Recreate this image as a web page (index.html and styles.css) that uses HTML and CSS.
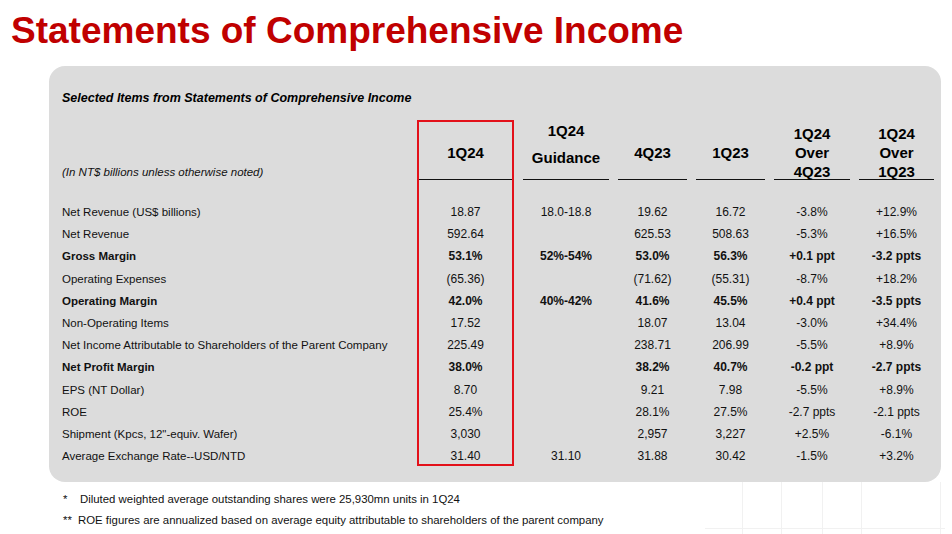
FILE: index.html
```html
<!DOCTYPE html>
<html lang="en">
<head>
<meta charset="utf-8">
<title>Statements of Comprehensive Income</title>
<link rel="stylesheet" href="styles.css">
</head>
<body>
<h1 class="title">Statements of Comprehensive Income</h1>
<section class="panel">
  <h2 class="subtitle">Selected Items from Statements of Comprehensive Income</h2>
  <div class="table">
    <div class="col col-label">
      <div class="head head-label">(In NT$ billions unless otherwise noted)</div>
      <div class="body">
        <div class="cell">Net Revenue (US$ billions)</div>
        <div class="cell">Net Revenue</div>
        <div class="cell b">Gross Margin</div>
        <div class="cell">Operating Expenses</div>
        <div class="cell b">Operating Margin</div>
        <div class="cell">Non-Operating Items</div>
        <div class="cell">Net Income Attributable to Shareholders of the Parent Company</div>
        <div class="cell b">Net Profit Margin</div>
        <div class="cell">EPS (NT Dollar)</div>
        <div class="cell">ROE</div>
        <div class="cell">Shipment (Kpcs, 12"-equiv. Wafer)</div>
        <div class="cell">Average Exchange Rate--USD/NTD</div>
      </div>
    </div>
    <div class="col col-hl">
      <div class="head"><span>1Q24</span></div>
      <div class="body">
        <div class="cell">18.87</div>
        <div class="cell">592.64</div>
        <div class="cell b">53.1%</div>
        <div class="cell">(65.36)</div>
        <div class="cell b">42.0%</div>
        <div class="cell">17.52</div>
        <div class="cell">225.49</div>
        <div class="cell b">38.0%</div>
        <div class="cell">8.70</div>
        <div class="cell">25.4%</div>
        <div class="cell">3,030</div>
        <div class="cell">31.40</div>
      </div>
    </div>
    <div class="col col-guid">
      <div class="head head-guid"><span>1Q24</span><span>Guidance</span></div>
      <div class="body">
        <div class="cell">18.0-18.8</div>
        <div class="cell"></div>
        <div class="cell b">52%-54%</div>
        <div class="cell"></div>
        <div class="cell b">40%-42%</div>
        <div class="cell"></div>
        <div class="cell"></div>
        <div class="cell b"></div>
        <div class="cell"></div>
        <div class="cell"></div>
        <div class="cell"></div>
        <div class="cell">31.10</div>
      </div>
    </div>
    <div class="col col-q">
      <div class="head"><span>4Q23</span></div>
      <div class="body">
        <div class="cell">19.62</div>
        <div class="cell">625.53</div>
        <div class="cell b">53.0%</div>
        <div class="cell">(71.62)</div>
        <div class="cell b">41.6%</div>
        <div class="cell">18.07</div>
        <div class="cell">238.71</div>
        <div class="cell b">38.2%</div>
        <div class="cell">9.21</div>
        <div class="cell">28.1%</div>
        <div class="cell">2,957</div>
        <div class="cell">31.88</div>
      </div>
    </div>
    <div class="col col-q">
      <div class="head"><span>1Q23</span></div>
      <div class="body">
        <div class="cell">16.72</div>
        <div class="cell">508.63</div>
        <div class="cell b">56.3%</div>
        <div class="cell">(55.31)</div>
        <div class="cell b">45.5%</div>
        <div class="cell">13.04</div>
        <div class="cell">206.99</div>
        <div class="cell b">40.7%</div>
        <div class="cell">7.98</div>
        <div class="cell">27.5%</div>
        <div class="cell">3,227</div>
        <div class="cell">30.42</div>
      </div>
    </div>
    <div class="col col-over1">
      <div class="head"><span>1Q24</span><span>Over</span><span>4Q23</span></div>
      <div class="body">
        <div class="cell">-3.8%</div>
        <div class="cell">-5.3%</div>
        <div class="cell b">+0.1 ppt</div>
        <div class="cell">-8.7%</div>
        <div class="cell b">+0.4 ppt</div>
        <div class="cell">-3.0%</div>
        <div class="cell">-5.5%</div>
        <div class="cell b">-0.2 ppt</div>
        <div class="cell">-5.5%</div>
        <div class="cell">-2.7 ppts</div>
        <div class="cell">+2.5%</div>
        <div class="cell">-1.5%</div>
      </div>
    </div>
    <div class="col col-over2">
      <div class="head"><span>1Q24</span><span>Over</span><span>1Q23</span></div>
      <div class="body">
        <div class="cell">+12.9%</div>
        <div class="cell">+16.5%</div>
        <div class="cell b">-3.2 ppts</div>
        <div class="cell">+18.2%</div>
        <div class="cell b">-3.5 ppts</div>
        <div class="cell">+34.4%</div>
        <div class="cell">+8.9%</div>
        <div class="cell b">-2.7 ppts</div>
        <div class="cell">+8.9%</div>
        <div class="cell">-2.1 ppts</div>
        <div class="cell">-6.1%</div>
        <div class="cell">+3.2%</div>
      </div>
    </div>
  </div>
</section>
<div class="notes">
  <p class="note"><span class="mark mark1">*</span>Diluted weighted average outstanding shares were 25,930mn units in 1Q24</p>
  <p class="note"><span class="mark mark2">**</span>ROE figures are annualized based on average equity attributable to shareholders of the parent company</p>
</div>
</body>
</html>
```

FILE: styles.css
```css
html, body {
  margin: 0;
  padding: 0;
}

body {
  width: 952px;
  height: 534px;
  overflow: hidden;
  font-family: "Liberation Sans", Arial, sans-serif;
  color: #111;
  background-color: #fff;
  background-image:
    linear-gradient(90deg, #f1f1f1 1px, transparent 1px),
    linear-gradient(90deg, #f1f1f1 1px, transparent 1px),
    linear-gradient(90deg, #f1f1f1 1px, transparent 1px),
    linear-gradient(90deg, #f1f1f1 1px, transparent 1px),
    linear-gradient(90deg, #f1f1f1 1px, transparent 1px),
    linear-gradient(0deg, #f1f1f1 1px, transparent 1px);
  background-repeat: no-repeat;
  background-size: 1px 52px, 1px 52px, 1px 52px, 1px 52px, 1px 52px, 240px 1px;
  background-position: 742px 482px, 781px 482px, 822px 482px, 861px 482px, 940px 482px, 705px 528px;
}

.title {
  margin: 0;
  padding: 12px 0 0 11px;
  font-size: 37px;
  line-height: 37px;
  font-weight: 700;
  color: #c00000;
}

.panel {
  box-sizing: border-box;
  margin: 17px 0 0 49px;
  width: 892px;
  height: 416px;
  padding: 24.5px 0 0 13px;
  background: #dcdcdc;
  border-radius: 16px;
}

.subtitle {
  margin: 0;
  font-size: 12.5px;
  line-height: 15px;
  font-weight: 700;
  font-style: italic;
  color: #000;
}

.table {
  display: flex;
  align-items: flex-start;
  gap: 9px;
  margin-top: 14.5px;
}

.col {
  display: flex;
  flex-direction: column;
  box-sizing: border-box;
  text-align: center;
}

.col > .head,
.col > .body {
  flex-shrink: 0;
}

.col-label { width: 346px; text-align: left; }
.col-hl {
  width: 97px;
  height: 346px;
  border: 2px solid #e3111a;
}
.col-guid { width: 86px; }
.col-q { width: 69px; }
.col-over1 { width: 76px; }
.col-over2 { width: 75px; }

.head {
  box-sizing: border-box;
  height: 60px;
  padding-top: 5px;
  border-bottom: 1px solid #111;
  display: flex;
  flex-direction: column;
  justify-content: center;
  align-items: center;
  font-size: 15px;
  line-height: 19px;
  font-weight: 700;
  color: #000;
}

.col-hl .head {
  height: 58px;
  padding-top: 3px;
}

.head-guid {
  justify-content: flex-start;
  padding-top: 1px;
  gap: 8px;
}

.head-label {
  border-bottom: 0;
  align-items: flex-start;
  justify-content: flex-end;
  padding: 0 0 1px 0;
  font-size: 11.5px;
  line-height: 14px;
  font-weight: 400;
  font-style: italic;
  color: #111;
}

.body {
  padding-top: 21px;
}

.cell {
  height: 22.2px;
  line-height: 22.2px;
  font-size: 12px;
  white-space: nowrap;
}

.col-label .cell {
  font-size: 11.5px;
}

.cell.b {
  font-weight: 700;
}

.notes {
  margin: 6.5px 0 0 63px;
}

.note {
  margin: 0;
  font-size: 11.4px;
  line-height: 21px;
  color: #111;
  white-space: nowrap;
}

.mark {
  display: inline-block;
}

.mark1 { width: 17px; }
.mark2 { width: 15px; }
```
